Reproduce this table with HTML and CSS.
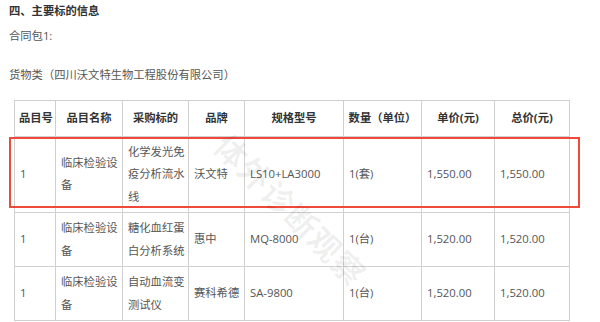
FILE: index.html
```html
<!DOCTYPE html>
<html lang="zh-CN">
<head>
<meta charset="utf-8">
<link rel="stylesheet" href="styles.css">
</head>
<body>
<div class="page">
  <h3 class="title">四、主要标的信息</h3>
  <p class="pkg">合同包1:</p>
  <p class="cat">货物类（四川沃文特生物工程股份有限公司）</p>
  <div class="table-wrap">
    <table class="items">
      <colgroup>
        <col class="c1"><col class="c2"><col class="c3"><col class="c4">
        <col class="c5"><col class="c6"><col class="c7"><col class="c8">
      </colgroup>
      <thead>
        <tr>
          <th>品目号</th><th>品目名称</th><th>采购标的</th><th>品牌</th>
          <th>规格型号</th><th>数量（单位）</th><th>单价(元)</th><th>总价(元)</th>
        </tr>
      </thead>
      <tbody>
        <tr>
          <td>1</td><td>临床检验设<br>备</td><td>化学发光免<br>疫分析流水<br>线</td><td>沃文特</td>
          <td>LS10+LA3000</td><td>1(套)</td><td>1,550.00</td><td>1,550.00</td>
        </tr>
        <tr>
          <td>1</td><td>临床检验设<br>备</td><td>糖化血红蛋<br>白分析系统</td><td>惠中</td>
          <td>MQ-8000</td><td>1(台)</td><td>1,520.00</td><td>1,520.00</td>
        </tr>
        <tr>
          <td>1</td><td>临床检验设<br>备</td><td>自动血流变<br>测试仪</td><td>赛科希德</td>
          <td>SA-9800</td><td>1(台)</td><td>1,520.00</td><td>1,520.00</td>
        </tr>
      </tbody>
    </table>
    <div class="highlight"></div>
    <div class="watermark">体外诊断观察</div>
  </div>
</div>
</body>
</html>
```

FILE: styles.css
```css
html, body {
  margin: 0;
  padding: 0;
  background: #fff;
}
.page {
  padding: 0 9px;
  font-family: "Open Sans", "Noto Sans CJK SC", sans-serif;
  font-size: 11.3px;
  color: #555;
  overflow: hidden;
  height: 322px;
}
.title {
  margin: 0;
  font-size: 11.3px;
  line-height: 22px;
  font-weight: bold;
  color: #333;
}
.pkg {
  margin: 3px 0 0;
  line-height: 22px;
}
.cat {
  margin: 17px 0 0;
  line-height: 22px;
}
.table-wrap {
  position: relative;
  margin: 14px 0 0 5px;
}
.items {
  border-collapse: collapse;
  table-layout: fixed;
  width: 555px;
}
.c1 { width: 41px; }
.c2 { width: 67px; }
.c3 { width: 66px; }
.c4 { width: 56px; }
.c5 { width: 99px; }
.c6 { width: 78px; }
.c7 { width: 73px; }
.c8 { width: 75px; }
.items th,
.items td {
  border: 1px solid #d0d0d0;
  line-height: 22.5px;
  padding: 4px 5px;
  vertical-align: middle;
  white-space: nowrap;
}
.items th {
  padding: 6px 4px;
  font-weight: bold;
  color: #333;
  text-align: center;
}
.items td {
  text-align: left;
}
.highlight {
  position: absolute;
  left: -5px;
  top: 37px;
  width: 567px;
  height: 67px;
  border: 2px solid #f0483a;
  pointer-events: none;
}
.watermark {
  position: absolute;
  left: 166px;
  top: 92px;
  width: 220px;
  line-height: 36px;
  text-align: center;
  font-size: 32px;
  font-weight: bold;
  letter-spacing: 1px;
  color: rgba(0, 0, 0, 0.06);
  transform: rotate(45deg);
  pointer-events: none;
}
```
